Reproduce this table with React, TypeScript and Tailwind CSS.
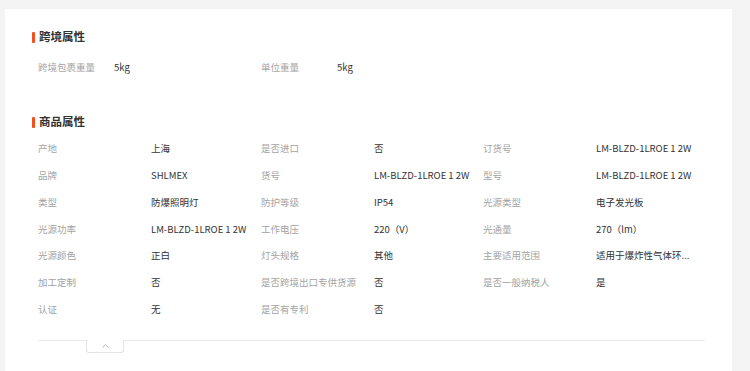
const crossBorder = [
  ["跨境包裹重量", "5kg"],
  ["单位重量", "5kg"],
];

const attrs: [string, string][] = [
  ["产地", "上海"],
  ["是否进口", "否"],
  ["订货号", "LM-BLZD-1LROE 1 2W"],
  ["品牌", "SHLMEX"],
  ["货号", "LM-BLZD-1LROE 1 2W"],
  ["型号", "LM-BLZD-1LROE 1 2W"],
  ["类型", "防爆照明灯"],
  ["防护等级", "IP54"],
  ["光源类型", "电子发光板"],
  ["光源功率", "LM-BLZD-1LROE 1 2W"],
  ["工作电压", "220（V）"],
  ["光通量", "270（lm）"],
  ["光源颜色", "正白"],
  ["灯头规格", "其他"],
  ["主要适用范围", "适用于爆炸性气体环..."],
  ["加工定制", "否"],
  ["是否跨境出口专供货源", "否"],
  ["是否一般纳税人", "是"],
  ["认证", "无"],
  ["是否有专利", "否"],
];

function Title({ text }: { text: string }) {
  return (
    <div className="flex items-center h-4 pl-[27px]">
      <span className="w-[3px] h-[11px] bg-[#f2501f] rounded-[1px]" />
      <span className="ml-[4px] text-[11.5px] font-bold text-[#333]">{text}</span>
    </div>
  );
}

export default function App() {
  return (
    <div
      className="min-h-screen bg-[#f4f4f4] flex"
      style={{ fontFamily: '"Noto Sans CJK SC", "Liberation Sans", sans-serif' }}
    >
      <div className="ml-[5px] mt-[9px] w-[727px] h-[362px] bg-white pt-[20px]">
        <Title text="跨境属性" />
        <div className="mt-[9px] pl-[33px] grid grid-cols-[223px_223px] h-[27px] items-center text-[9.5px]">
          {crossBorder.map(([k, v]) => (
            <div key={k} className="flex">
              <span className="w-[76px] text-[#a3a3a3]">{k}</span>
              <span className="text-[#333]">{v}</span>
            </div>
          ))}
        </div>

        <div className="mt-[33px]">
          <Title text="商品属性" />
        </div>
        <div className="mt-[5px] pl-[33px] grid grid-cols-[223px_222px_222px] auto-rows-[26.8px] items-center text-[9.5px]">
          {attrs.map(([k, v]) => (
            <div key={k} className="flex whitespace-nowrap">
              <span className="w-[113px] text-[#a3a3a3]">{k}</span>
              <span className="text-[#333]">{v}</span>
            </div>
          ))}
        </div>

        <div className="mt-[17px] ml-[33px] w-[667px] border-t border-[#e8e8e8] relative">
          <div className="absolute left-[48px] -top-px w-[38px] h-[13px] bg-white border border-t-0 border-[#e4e4e4] rounded-b-[3px] flex items-center justify-center">
            <svg width="7" height="4" viewBox="0 0 7 4" fill="none">
              <path d="M0.5 3.5 L3.5 0.8 L6.5 3.5" stroke="#aaa" strokeWidth="0.9" />
            </svg>
          </div>
        </div>
      </div>
    </div>
  );
}
